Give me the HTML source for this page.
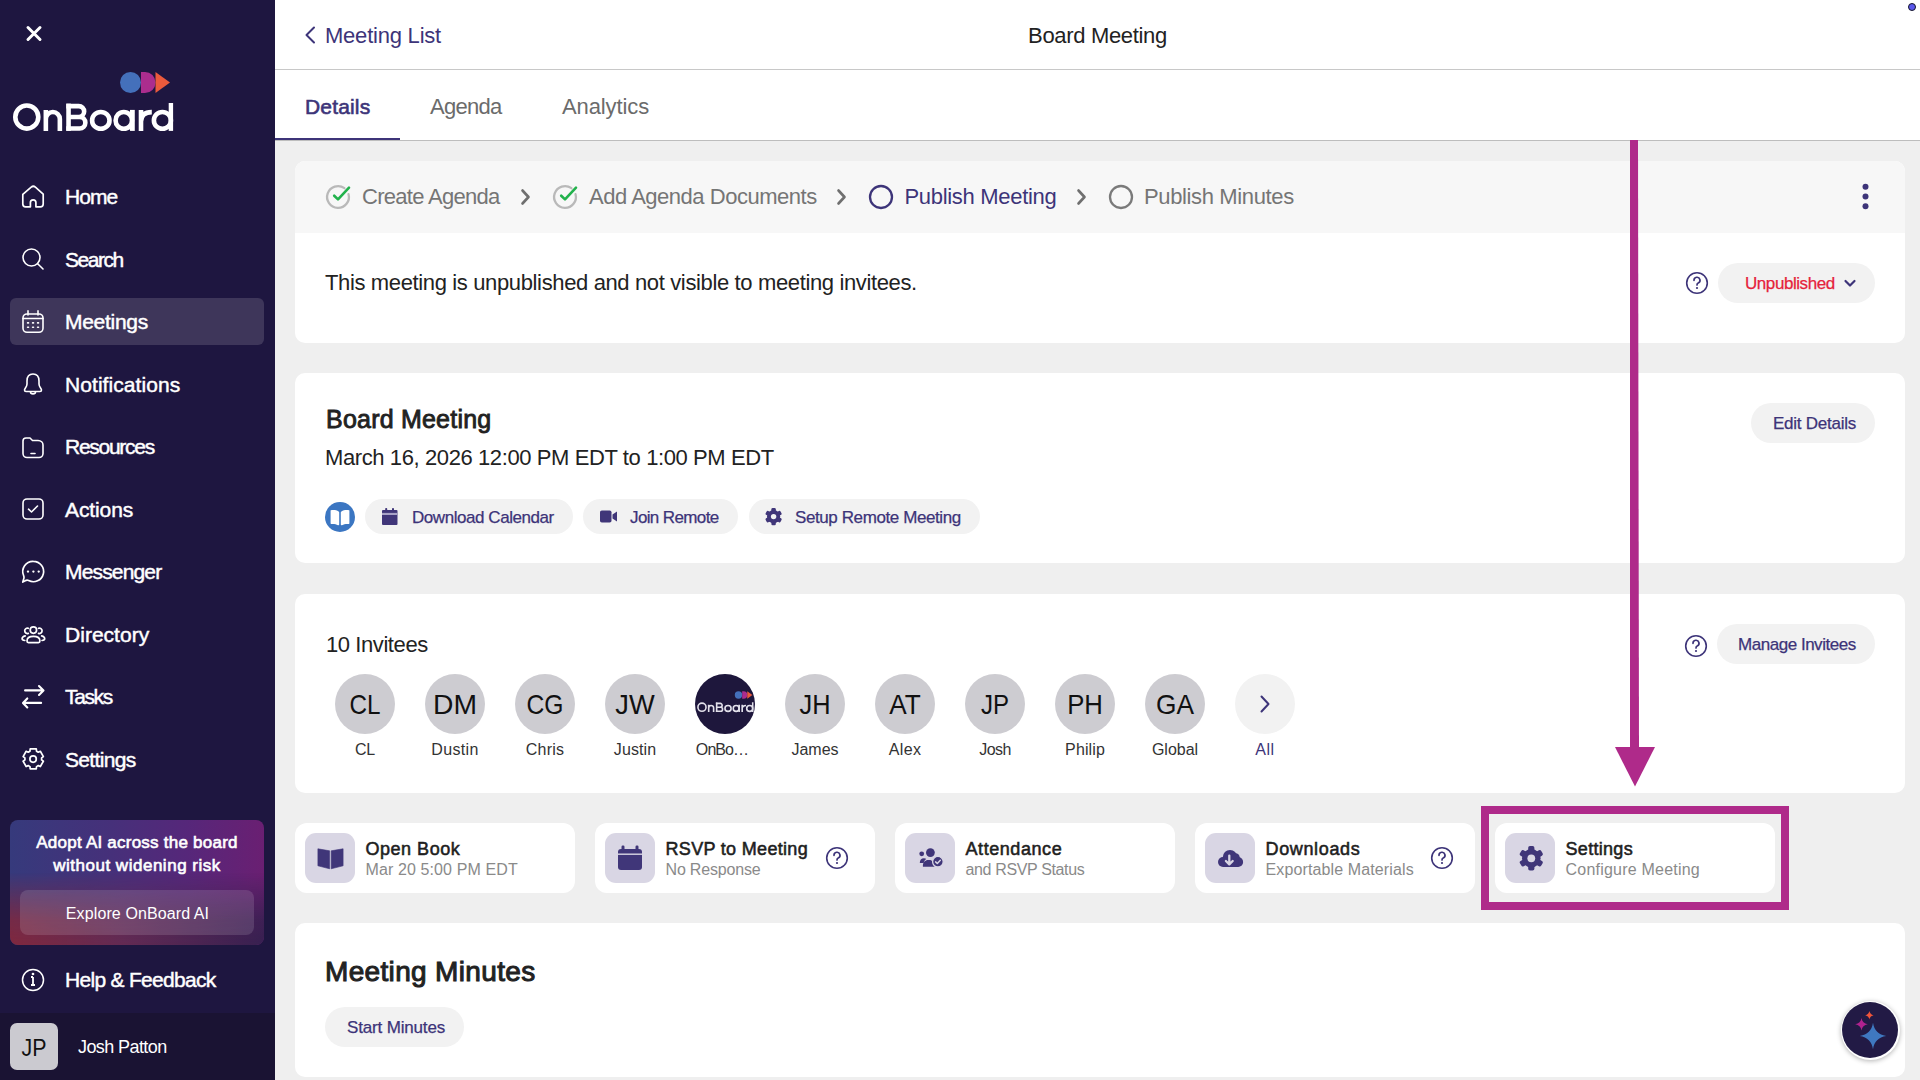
<!DOCTYPE html>
<html><head><meta charset="utf-8"><title>OnBoard - Board Meeting</title>
<style>
html,body{margin:0;padding:0;}
body{width:1920px;height:1080px;overflow:hidden;position:relative;background:#efefef;font-family:"Liberation Sans",sans-serif;}
.t{position:absolute;white-space:nowrap;line-height:1;}
</style></head><body>
<div id="sb" style="position:absolute;left:0;top:0;width:275px;height:1080px;background:#1e1640"></div>
<div style="position:absolute;left:0;top:1013px;width:275px;height:67px;background:#1a1333"></div>
<svg style="position:absolute;left:0;top:0" width="70" height="70"><path d="M28 27.5 L40 39.5 M40 27.5 L28 39.5" stroke="#fff" stroke-width="3" stroke-linecap="round"/></svg>
<svg style="position:absolute;left:110px;top:66px" width="70" height="34" viewBox="110 66 70 34"><circle cx="130.5" cy="82.5" r="10.5" fill="#4470bb"/><path d="M141 72 H145 A10.5 10.5 0 0 1 145 93 H141 Z" fill="#ab2d8e"/><path d="M155.5 72 L170 82.5 L155.5 93 Z" fill="#eb5a3c"/></svg>
<svg style="position:absolute;left:0;top:95px" width="180" height="40" viewBox="0 95 180 40" fill="none" stroke="#fff" stroke-width="4.6"><ellipse cx="26.8" cy="117.05" rx="11.5" ry="11.55"/><path d="M45.85 110.1 V130.9 M45.85 119 A7 7 0 0 1 59.85 119 V130.9"/><path d="M68.55 103.6 V130.9"/><path d="M66.3 106.15 H78.7 A5.45 5.45 0 0 1 78.7 117.05 H68.55 M68.55 117.05 H79.6 A5.75 5.75 0 0 1 79.6 128.55 H66.3"/><ellipse cx="100.8" cy="120.4" rx="8.7" ry="8.4"/><ellipse cx="123.8" cy="120.4" rx="8.2" ry="8.4"/><path d="M132.4 109.9 V130.9" stroke-width="4.75"/><path d="M141 109.9 V130.9 M141 121.5 C141 114.6 145 112.1 151.8 112.1"/><ellipse cx="162.4" cy="120.4" rx="8.5" ry="8.4"/><path d="M170.9 103 V130.9" stroke-width="4.4"/></svg>
<div style="position:absolute;left:10px;top:298px;width:254px;height:47px;border-radius:6px;background:#3e365a"></div>
<div class="t" id="nav0" style="left:65px;top:186.42px;font-size:21px;color:#fff;font-weight:400;letter-spacing:-0.944px;-webkit-text-stroke-width:0.45px;">Home</div>
<div class="t" id="nav1" style="left:65px;top:248.92px;font-size:21px;color:#fff;font-weight:400;letter-spacing:-1.468px;-webkit-text-stroke-width:0.45px;">Search</div>
<div class="t" id="nav2" style="left:65px;top:311.42px;font-size:21px;color:#fff;font-weight:400;letter-spacing:-0.287px;-webkit-text-stroke-width:0.45px;">Meetings</div>
<div class="t" id="nav3" style="left:65px;top:373.92px;font-size:21px;color:#fff;font-weight:400;letter-spacing:0.067px;-webkit-text-stroke-width:0.45px;">Notifications</div>
<div class="t" id="nav4" style="left:65px;top:436.42px;font-size:21px;color:#fff;font-weight:400;letter-spacing:-1.272px;-webkit-text-stroke-width:0.45px;">Resources</div>
<div class="t" id="nav5" style="left:65px;top:498.92px;font-size:21px;color:#fff;font-weight:400;letter-spacing:-0.112px;-webkit-text-stroke-width:0.45px;">Actions</div>
<div class="t" id="nav6" style="left:65px;top:561.42px;font-size:21px;color:#fff;font-weight:400;letter-spacing:-0.836px;-webkit-text-stroke-width:0.45px;">Messenger</div>
<div class="t" id="nav7" style="left:65px;top:623.92px;font-size:21px;color:#fff;font-weight:400;letter-spacing:0.023px;-webkit-text-stroke-width:0.45px;">Directory</div>
<div class="t" id="nav8" style="left:65px;top:686.42px;font-size:21px;color:#fff;font-weight:400;letter-spacing:-1.372px;-webkit-text-stroke-width:0.45px;">Tasks</div>
<div class="t" id="nav9" style="left:65px;top:748.92px;font-size:21px;color:#fff;font-weight:400;letter-spacing:-0.670px;-webkit-text-stroke-width:0.45px;">Settings</div>
<svg style="position:absolute;left:18px;top:181.5px" width="30" height="30" viewBox="0 0 30 30" fill="none" stroke="#fff" stroke-width="1.6" stroke-linecap="round" stroke-linejoin="round"><path d="M4.8 12.4 L13.2 5.1 Q15.3 3.4 17.4 5.1 L25.2 12.1 V22 A2.8 2.8 0 0 1 22.4 24.8 H17.9 V20.6 A2.75 2.75 0 0 0 12.4 20.6 V24.8 H7.6 A2.8 2.8 0 0 1 4.8 22 Z" stroke-width="1.7"/></svg>
<svg style="position:absolute;left:18px;top:244.0px" width="30" height="30" viewBox="0 0 30 30" fill="none" stroke="#fff" stroke-width="1.6" stroke-linecap="round" stroke-linejoin="round"><circle cx="13.5" cy="13.5" r="8.5"/><path d="M19.7 19.7 L25 25"/></svg>
<svg style="position:absolute;left:18px;top:306.5px" width="30" height="30" viewBox="0 0 30 30" fill="none" stroke="#fff" stroke-width="1.6" stroke-linecap="round" stroke-linejoin="round"><rect x="5" y="7" width="20" height="18.3" rx="4"/><path d="M5 11.5 H25 M10 3.9 V8 M20 3.9 V8"/><path d="M9.6 15.9h.9 M14.6 15.9h.9 M19.6 15.9h.9 M9.6 20.3h.9 M14.6 20.3h.9 M19.6 20.3h.9" stroke-width="1.6"/></svg>
<svg style="position:absolute;left:18px;top:369.0px" width="30" height="30" viewBox="0 0 30 30" fill="none" stroke="#fff" stroke-width="1.6" stroke-linecap="round" stroke-linejoin="round"><path d="M15 5 C10.5 5 9 8.5 9 12 V15 C9 18 6.5 19.5 6.5 21 C6.5 22 7 22.5 8 22.5 H22 C23 22.5 23.5 22 23.5 21 C23.5 19.5 21 18 21 15 V12 C21 8.5 19.5 5 15 5 Z"/><path d="M12.5 23 C12.5 25.5 17.5 25.5 17.5 23"/></svg>
<svg style="position:absolute;left:18px;top:431.5px" width="30" height="30" viewBox="0 0 30 30" fill="none" stroke="#fff" stroke-width="1.6" stroke-linecap="round" stroke-linejoin="round"><path d="M5 9 A3 3 0 0 1 8 6 H12 L14.5 8.5 H20 C23 8.5 25 10.5 25 13 V21.5 A4 4 0 0 1 21 25.5 H9 A4 4 0 0 1 5 21.5 Z"/><path d="M13 21.5 H17"/></svg>
<svg style="position:absolute;left:18px;top:494.0px" width="30" height="30" viewBox="0 0 30 30" fill="none" stroke="#fff" stroke-width="1.6" stroke-linecap="round" stroke-linejoin="round"><rect x="5" y="5" width="20" height="20" rx="4"/><path d="M10.5 15.2 L13.5 18 L19.5 12"/></svg>
<svg style="position:absolute;left:18px;top:556.5px" width="30" height="30" viewBox="0 0 30 30" fill="none" stroke="#fff" stroke-width="1.6" stroke-linecap="round" stroke-linejoin="round"><path d="M15.4 4.3 A10.2 10.2 0 1 1 10.6 23.5 C9.5 23 8.5 23 7.2 23.8 L4.8 25 L5.9 21.3 C6.2 20.3 6 19.5 5.6 18.5 A10.2 10.2 0 0 1 15.4 4.3 Z" stroke-width="1.7"/><path d="M9.9 14.6h.2 M15.3 14.6h.2 M20.6 14.6h.2" stroke-width="2.2"/></svg>
<svg style="position:absolute;left:18px;top:619.0px" width="30" height="30" viewBox="0 0 30 30" fill="none" stroke="#fff" stroke-width="1.6" stroke-linecap="round" stroke-linejoin="round"><circle cx="15.4" cy="11.1" r="3.2" stroke-width="1.7"/><path d="M10.3 9.3 A2.7 2.7 0 1 0 10.3 14.4 M20.5 9.3 A2.7 2.7 0 1 1 20.5 14.4" stroke-width="1.7"/><path d="M9 22 C9 19 11.5 17.4 15.4 17.4 C19.3 17.4 21.9 19 21.9 22 C21.9 23 21.4 23.6 20.5 23.6 H10.4 C9.5 23.6 9 23 9 22 Z" stroke-width="1.7"/><path d="M7.2 16.9 C5.2 17.4 4.1 18.6 4.1 19.8 C4.1 20.8 5 21.4 6.8 21.5 M23.6 16.9 C25.6 17.4 26.7 18.6 26.7 19.8 C26.7 20.8 25.8 21.4 24 21.5" stroke-width="1.7"/></svg>
<svg style="position:absolute;left:18px;top:681.5px" width="30" height="30" viewBox="0 0 30 30" fill="none" stroke="#fff" stroke-width="1.6" stroke-linecap="round" stroke-linejoin="round"><path d="M7.1 8.4 H25.3 M21 4 L25.5 8.4 L21 12.9 M23.1 20.9 H5.2 M9.3 16.4 L5 20.9 L9.3 25.4" stroke-width="2.1"/></svg>
<svg style="position:absolute;left:18px;top:744.0px" width="30" height="30" viewBox="0 0 30 30" fill="none" stroke="#fff" stroke-width="1.6" stroke-linecap="round" stroke-linejoin="round"><path d="M12.21 4.95 L18.29 4.95 L18.53 7.17 L20.31 8.19 L22.34 7.29 L25.38 12.56 L23.59 13.88 L23.59 15.92 L25.38 17.24 L22.34 22.51 L20.31 21.61 L18.53 22.63 L18.29 24.85 L12.21 24.85 L11.97 22.63 L10.19 21.61 L8.16 22.51 L5.12 17.24 L6.91 15.92 L6.91 13.88 L5.12 12.56 L8.16 7.29 L10.19 8.19 L11.97 7.17 Z" stroke-width="1.7"/><circle cx="15.1" cy="15.1" r="3.2" stroke-width="1.7"/></svg>
<div style="position:absolute;left:10px;top:820px;width:254px;height:125px;border-radius:8px;background:linear-gradient(90deg,#363a7c 0%,#46307a 40%,#56277a 70%,#6a1f72 100%);overflow:hidden"><div style="position:absolute;left:0;top:0;width:254px;height:125px;background:linear-gradient(90deg,rgba(128,40,62,1) 0%,rgba(100,42,80,0.95) 45%,rgba(52,32,78,0.95) 100%);-webkit-mask-image:linear-gradient(180deg,transparent 0%,transparent 42%,rgba(0,0,0,0.85) 80%,#000 100%)"></div></div>
<div style="position:absolute;left:20px;top:890px;width:234px;height:45px;border-radius:8px;background:rgba(255,255,255,0.13)"></div>
<div class="t" id="ai1" style="left:137px;transform:translateX(-50%);top:833.61px;font-size:17px;color:#fff;font-weight:400;letter-spacing:0.232px;-webkit-text-stroke-width:0.6px;">Adopt AI across the board</div>
<div class="t" id="ai2" style="left:137px;transform:translateX(-50%);top:856.61px;font-size:17px;color:#fff;font-weight:400;letter-spacing:0.517px;-webkit-text-stroke-width:0.6px;">without widening risk</div>
<div class="t" id="ai3" style="left:137.5px;transform:translateX(-50%);top:906.45px;font-size:16px;color:#fff;font-weight:400;letter-spacing:0.105px;">Explore OnBoard AI</div>
<svg style="position:absolute;left:18px;top:964.5px" width="30" height="30" viewBox="0 0 30 30" fill="none" stroke="#fff" stroke-width="1.5"><circle cx="15" cy="15" r="10.5"/><path d="M15 12 V20 M13 12 H15 M13 20 H17" stroke-width="1.8"/><circle cx="15" cy="9" r="0.6" fill="#fff"/></svg>
<div class="t" id="help" style="left:65px;top:969.42px;font-size:21px;color:#fff;font-weight:400;letter-spacing:-0.707px;-webkit-text-stroke-width:0.45px;">Help &amp; Feedback</div>
<div style="position:absolute;left:10px;top:1023px;width:48px;height:47px;border-radius:7px;background:#cbcad0"></div>
<div class="t" id="jp" style="left:34px;transform:translateX(-50%) scaleX(0.892);top:1036.18px;font-size:24px;color:#111;font-weight:400;letter-spacing:0.000px;">JP</div>
<div class="t" id="josh" style="left:78px;top:1037.56px;font-size:18px;color:#fff;font-weight:400;letter-spacing:-0.586px;">Josh Patton</div>
<div style="position:absolute;left:275px;top:0;width:1645px;height:140px;background:#fff"></div>
<div style="position:absolute;left:275px;top:69px;width:1645px;height:1px;background:#c8c8c8"></div>
<div style="position:absolute;left:275px;top:140px;width:1645px;height:1px;background:#bdbdbd"></div>
<svg style="position:absolute;left:300px;top:22px" width="20" height="26"><path d="M14 5.5 L6.5 13 L14 20.5" fill="none" stroke="#3d3479" stroke-width="2" stroke-linecap="round" stroke-linejoin="round"/></svg>
<div class="t" id="mlist" style="left:325px;top:25.17px;font-size:22px;color:#3d3479;font-weight:400;letter-spacing:-0.220px;">Meeting List</div>
<div class="t" id="hdr" style="left:1097.5px;transform:translateX(-50%);top:25.17px;font-size:22px;color:#222;font-weight:400;letter-spacing:-0.324px;">Board Meeting</div>
<div class="t" id="tab1" style="left:305px;top:96.42px;font-size:21px;color:#3d3479;font-weight:400;letter-spacing:0.168px;-webkit-text-stroke-width:0.6px;">Details</div>
<div class="t" id="tab2" style="left:430px;top:95.57px;font-size:22px;color:#6b6b6b;font-weight:400;letter-spacing:-0.733px;">Agenda</div>
<div class="t" id="tab3" style="left:562px;top:95.57px;font-size:22px;color:#6b6b6b;font-weight:400;letter-spacing:-0.105px;">Analytics</div>
<div style="position:absolute;left:275px;top:138px;width:125px;height:2px;background:#3d3479"></div>
<div style="position:absolute;left:1908px;top:3.2px;width:6px;height:6px;border-radius:50%;background:#5a57ec;border:1px solid #15152a"></div>
<div style="position:absolute;left:275px;top:141px;width:1645px;height:939px;background:#efefef"></div>
<div style="position:absolute;left:295px;top:161px;width:1610px;height:182px;border-radius:10px;background:#fff;overflow:hidden"><div style="position:absolute;left:0;top:0;width:1610px;height:72px;background:#f7f7f7"></div></div>
<svg style="position:absolute;left:324px;top:183px" width="28" height="28" viewBox="0 0 28 28" fill="none"><path d="M24.53 11.18 A10.9 10.9 0 1 1 20.41 5.18" stroke="#b9b9b9" stroke-width="2.3" stroke-linecap="round"/><path d="M10.2 12.7 L14 16.4 L25 4.6" stroke="#22b24c" stroke-width="2.6" stroke-linecap="round" stroke-linejoin="round"/></svg>
<div class="t" id="st1" style="left:362px;top:186.07px;font-size:22px;color:#757575;font-weight:400;letter-spacing:-0.715px;">Create Agenda</div>
<svg style="position:absolute;left:516px;top:187px" width="20" height="20" viewBox="0 0 20 20"><path d="M6.5 3.5 L12.5 10 L6.5 16.5" fill="none" stroke="#6f6f6f" stroke-width="2.6" stroke-linecap="round" stroke-linejoin="round"/></svg>
<svg style="position:absolute;left:551px;top:183px" width="28" height="28" viewBox="0 0 28 28" fill="none"><path d="M24.53 11.18 A10.9 10.9 0 1 1 20.41 5.18" stroke="#b9b9b9" stroke-width="2.3" stroke-linecap="round"/><path d="M10.2 12.7 L14 16.4 L25 4.6" stroke="#22b24c" stroke-width="2.6" stroke-linecap="round" stroke-linejoin="round"/></svg>
<div class="t" id="st2" style="left:589px;top:186.07px;font-size:22px;color:#757575;font-weight:400;letter-spacing:-0.478px;">Add Agenda Documents</div>
<svg style="position:absolute;left:832px;top:187px" width="20" height="20" viewBox="0 0 20 20"><path d="M6.5 3.5 L12.5 10 L6.5 16.5" fill="none" stroke="#6f6f6f" stroke-width="2.6" stroke-linecap="round" stroke-linejoin="round"/></svg>
<svg style="position:absolute;left:867px;top:183px" width="28" height="28" viewBox="0 0 28 28"><circle cx="14" cy="14" r="11" fill="none" stroke="#3d3479" stroke-width="2.3"/></svg>
<div class="t" id="st3" style="left:904.5px;top:186.07px;font-size:22px;color:#3d3479;font-weight:400;letter-spacing:-0.311px;">Publish Meeting</div>
<svg style="position:absolute;left:1072px;top:187px" width="20" height="20" viewBox="0 0 20 20"><path d="M6.5 3.5 L12.5 10 L6.5 16.5" fill="none" stroke="#6f6f6f" stroke-width="2.6" stroke-linecap="round" stroke-linejoin="round"/></svg>
<svg style="position:absolute;left:1107px;top:183px" width="28" height="28" viewBox="0 0 28 28"><circle cx="14" cy="14" r="11" fill="none" stroke="#7a7a7a" stroke-width="2.3"/></svg>
<div class="t" id="st4" style="left:1144px;top:186.07px;font-size:22px;color:#757575;font-weight:400;letter-spacing:-0.365px;">Publish Minutes</div>
<svg style="position:absolute;left:1855px;top:177px" width="20" height="40"><circle cx="10.5" cy="9.7" r="3" fill="#3d3479"/><circle cx="10.5" cy="19.5" r="3" fill="#3d3479"/><circle cx="10.5" cy="29.2" r="3" fill="#3d3479"/></svg>
<div class="t" id="unpub_msg" style="left:325px;top:272.27px;font-size:22px;color:#222;font-weight:400;letter-spacing:-0.364px;">This meeting is unpublished and not visible to meeting invitees.</div>
<svg style="position:absolute;left:1684px;top:269.5px" width="26" height="26" viewBox="0 0 26 26"><circle cx="13" cy="13" r="10.3" fill="none" stroke="#3d3479" stroke-width="1.6"/><path d="M10 10.3 A3 3 0 1 1 14.2 13 C13.3 13.4 13 14 13 15" fill="none" stroke="#3d3479" stroke-width="1.7" stroke-linecap="round"/><circle cx="13" cy="18" r="1.1" fill="#3d3479"/></svg>
<div style="position:absolute;left:1718px;top:263px;width:157px;height:40px;border-radius:20px;background:#f2f2f2"></div>
<div class="t" id="unpub" style="left:1745px;top:275.11px;font-size:17px;color:#e5223b;font-weight:400;letter-spacing:-0.433px;-webkit-text-stroke-width:0.25px;">Unpublished</div>
<svg style="position:absolute;left:1840px;top:273px" width="20" height="20"><path d="M5.5 8 L10 12.5 L14.5 8" fill="none" stroke="#3d3479" stroke-width="2.2" stroke-linecap="round" stroke-linejoin="round"/></svg>
<div style="position:absolute;left:295px;top:373px;width:1610px;height:190px;border-radius:10px;background:#fff"></div>
<div class="t" id="bm" style="left:326px;top:406.73px;font-size:25px;color:#222;font-weight:400;letter-spacing:0.217px;-webkit-text-stroke-width:0.85px;">Board Meeting</div>
<div class="t" id="date" style="left:325px;top:446.97px;font-size:22px;color:#222;font-weight:400;letter-spacing:-0.397px;">March 16, 2026 12:00 PM EDT to 1:00 PM EDT</div>
<div style="position:absolute;left:1751px;top:403px;width:124px;height:40px;border-radius:20px;background:#f2f2f2"></div>
<div class="t" id="edit" style="left:1773px;top:414.61px;font-size:17px;color:#3d3479;font-weight:400;letter-spacing:-0.253px;-webkit-text-stroke-width:0.25px;">Edit Details</div>
<svg style="position:absolute;left:325px;top:502px" width="30" height="30" viewBox="0 0 30 30"><circle cx="15" cy="15" r="15" fill="#3b76c2"/><path d="M5.8 8.2 C8.5 7.6 11.5 8 13.6 9.4 C14 9.7 14.2 10 14.2 10.5 V22.5 C14.2 23.2 13.6 23.5 13 23.2 C11 22 8.5 21.7 6.2 22 C5.7 22 5.6 21.7 5.6 21.3 V8.6 Z" fill="#fff"/><path d="M24.2 8.2 C21.5 7.6 18.5 8 16.4 9.4 C16 9.7 15.8 10 15.8 10.5 V22.5 C15.8 23.2 16.4 23.5 17 23.2 C19 22 21.5 21.7 23.8 22 C24.3 22 24.4 21.7 24.4 21.3 V8.6 Z" fill="#fff"/></svg>
<div style="position:absolute;left:365px;top:499px;width:208px;height:35px;border-radius:18px;background:#f2f2f2"></div><svg style="position:absolute;left:382px;top:508px" width="16" height="17" viewBox="0 0 16 17"><rect x="0" y="2" width="15.5" height="15" rx="1" fill="#403679"/><rect x="3.2" y="0" width="2" height="4" rx="0.8" fill="#403679"/><rect x="10" y="0" width="2" height="4" rx="0.8" fill="#403679"/><rect x="0" y="4.9" width="15.5" height="2.1" fill="#a8a2c6"/></svg>
<div class="t" id="c1t" style="left:412px;top:508.71px;font-size:17px;color:#3d3479;font-weight:400;letter-spacing:-0.445px;-webkit-text-stroke-width:0.25px;">Download Calendar</div>
<div style="position:absolute;left:583px;top:499px;width:155px;height:35px;border-radius:18px;background:#f2f2f2"></div><svg style="position:absolute;left:600px;top:508px" width="18" height="17" viewBox="0 0 18 17"><rect x="0" y="2.5" width="11.5" height="12" rx="1.8" fill="#403679"/><path d="M12.5 6.5 L17 3.5 V13.5 L12.5 10.5 Z" fill="#403679"/></svg>
<div class="t" id="c2t" style="left:630px;top:508.71px;font-size:17px;color:#3d3479;font-weight:400;letter-spacing:-0.625px;-webkit-text-stroke-width:0.25px;">Join Remote</div>
<div style="position:absolute;left:749px;top:499px;width:231px;height:35px;border-radius:18px;background:#f2f2f2"></div><svg style="position:absolute;left:764.40px;top:506.90px" width="19.2" height="19.2" viewBox="-9.6 -9.6 19.2 19.2"><g transform="rotate(0)"><circle r="6.6" fill="#403679"/><rect x="-2.2" y="-8.6" width="4.4" height="8.6" rx="1.23" fill="#403679" transform="rotate(0)"/><rect x="-2.2" y="-8.6" width="4.4" height="8.6" rx="1.23" fill="#403679" transform="rotate(60)"/><rect x="-2.2" y="-8.6" width="4.4" height="8.6" rx="1.23" fill="#403679" transform="rotate(120)"/><rect x="-2.2" y="-8.6" width="4.4" height="8.6" rx="1.23" fill="#403679" transform="rotate(180)"/><rect x="-2.2" y="-8.6" width="4.4" height="8.6" rx="1.23" fill="#403679" transform="rotate(240)"/><rect x="-2.2" y="-8.6" width="4.4" height="8.6" rx="1.23" fill="#403679" transform="rotate(300)"/><circle r="2.7" fill="#f2f2f2"/></g></svg>
<div class="t" id="c3t" style="left:795px;top:508.71px;font-size:17px;color:#3d3479;font-weight:400;letter-spacing:-0.405px;-webkit-text-stroke-width:0.25px;">Setup Remote Meeting</div>
<div style="position:absolute;left:295px;top:594px;width:1610px;height:199px;border-radius:10px;background:#fff"></div>
<div class="t" id="inv" style="left:326px;top:634.17px;font-size:22px;color:#222;font-weight:400;letter-spacing:-0.421px;">10 Invitees</div>
<svg style="position:absolute;left:1683px;top:632.5px" width="26" height="26" viewBox="0 0 26 26"><circle cx="13" cy="13" r="10.3" fill="none" stroke="#3d3479" stroke-width="1.6"/><path d="M10 10.3 A3 3 0 1 1 14.2 13 C13.3 13.4 13 14 13 15" fill="none" stroke="#3d3479" stroke-width="1.7" stroke-linecap="round"/><circle cx="13" cy="18" r="1.1" fill="#3d3479"/></svg>
<div style="position:absolute;left:1717px;top:624px;width:158px;height:40px;border-radius:20px;background:#f2f2f2"></div>
<div class="t" id="manage" style="left:1738px;top:635.61px;font-size:17px;color:#3d3479;font-weight:400;letter-spacing:-0.468px;-webkit-text-stroke-width:0.25px;">Manage Invitees</div>
<div style="position:absolute;left:335px;top:674px;width:60px;height:60px;border-radius:50%;background:#cdccd1"></div>
<div class="t" id="ini0" style="left:365px;transform:translateX(-50%) scaleX(0.866);top:690.99px;font-size:28px;color:#111;font-weight:400;letter-spacing:0.000px;">CL</div>
<div class="t" id="nm0" style="left:365px;transform:translateX(-50%);top:742.05px;font-size:16px;color:#333;font-weight:400;letter-spacing:-0.253px;">CL</div>
<div style="position:absolute;left:425px;top:674px;width:60px;height:60px;border-radius:50%;background:#cdccd1"></div>
<div class="t" id="ini1" style="left:455px;transform:translateX(-50%) scaleX(1.010);top:690.99px;font-size:28px;color:#111;font-weight:400;letter-spacing:0.000px;">DM</div>
<div class="t" id="nm1" style="left:455px;transform:translateX(-50%);top:742.05px;font-size:16px;color:#333;font-weight:400;letter-spacing:0.367px;">Dustin</div>
<div style="position:absolute;left:515px;top:674px;width:60px;height:60px;border-radius:50%;background:#cdccd1"></div>
<div class="t" id="ini2" style="left:545px;transform:translateX(-50%) scaleX(0.881);top:690.99px;font-size:28px;color:#111;font-weight:400;letter-spacing:0.000px;">CG</div>
<div class="t" id="nm2" style="left:545px;transform:translateX(-50%);top:742.05px;font-size:16px;color:#333;font-weight:400;letter-spacing:0.213px;">Chris</div>
<div style="position:absolute;left:605px;top:674px;width:60px;height:60px;border-radius:50%;background:#cdccd1"></div>
<div class="t" id="ini3" style="left:635px;transform:translateX(-50%) scaleX(0.974);top:690.99px;font-size:28px;color:#111;font-weight:400;letter-spacing:0.000px;">JW</div>
<div class="t" id="nm3" style="left:635px;transform:translateX(-50%);top:742.05px;font-size:16px;color:#333;font-weight:400;letter-spacing:0.079px;">Justin</div>
<div style="position:absolute;left:695px;top:674px;width:60px;height:60px;border-radius:50%;background:#1e173c;overflow:hidden"><svg style="position:absolute;left:0;top:0" width="60" height="60" viewBox="0 0 60 60"><g transform="translate(-2.458 -7.977) scale(0.352)"><circle cx="130.5" cy="82.5" r="10.5" fill="#4470bb"/><path d="M141 72 H145 A10.5 10.5 0 0 1 145 93 H141 Z" fill="#ab2d8e"/><path d="M155.5 72 L170 82.5 L155.5 93 Z" fill="#eb5a3c"/><g fill="none" stroke="#e2e0ea" stroke-width="4.6"><ellipse cx="26.8" cy="117.05" rx="11.5" ry="11.55"/><path d="M45.85 110.1 V130.9 M45.85 119 A7 7 0 0 1 59.85 119 V130.9"/><path d="M68.55 103.6 V130.9"/><path d="M66.3 106.15 H78.7 A5.45 5.45 0 0 1 78.7 117.05 H68.55 M68.55 117.05 H79.6 A5.75 5.75 0 0 1 79.6 128.55 H66.3"/><ellipse cx="100.8" cy="120.4" rx="8.7" ry="8.4"/><ellipse cx="123.8" cy="120.4" rx="8.2" ry="8.4"/><path d="M132.4 109.9 V130.9" stroke-width="4.75"/><path d="M141 109.9 V130.9 M141 121.5 C141 114.6 145 112.1 151.8 112.1"/><ellipse cx="162.4" cy="120.4" rx="8.5" ry="8.4"/><path d="M170.9 103 V130.9" stroke-width="4.4"/></g></g></svg></div>
<div class="t" id="nm4" style="left:722px;transform:translateX(-50%);top:742.05px;font-size:16px;color:#333;font-weight:400;letter-spacing:-0.929px;">OnBo…</div>
<div style="position:absolute;left:785px;top:674px;width:60px;height:60px;border-radius:50%;background:#cdccd1"></div>
<div class="t" id="ini5" style="left:815px;transform:translateX(-50%) scaleX(0.906);top:690.99px;font-size:28px;color:#111;font-weight:400;letter-spacing:0.000px;">JH</div>
<div class="t" id="nm5" style="left:815px;transform:translateX(-50%);top:742.05px;font-size:16px;color:#333;font-weight:400;letter-spacing:0.018px;">James</div>
<div style="position:absolute;left:875px;top:674px;width:60px;height:60px;border-radius:50%;background:#cdccd1"></div>
<div class="t" id="ini6" style="left:905px;transform:translateX(-50%) scaleX(0.935);top:690.99px;font-size:28px;color:#111;font-weight:400;letter-spacing:0.000px;">AT</div>
<div class="t" id="nm6" style="left:905px;transform:translateX(-50%);top:742.05px;font-size:16px;color:#333;font-weight:400;letter-spacing:0.354px;">Alex</div>
<div style="position:absolute;left:965px;top:674px;width:60px;height:60px;border-radius:50%;background:#cdccd1"></div>
<div class="t" id="ini7" style="left:995px;transform:translateX(-50%) scaleX(0.857);top:690.99px;font-size:28px;color:#111;font-weight:400;letter-spacing:0.000px;">JP</div>
<div class="t" id="nm7" style="left:995px;transform:translateX(-50%);top:742.05px;font-size:16px;color:#333;font-weight:400;letter-spacing:-0.537px;">Josh</div>
<div style="position:absolute;left:1055px;top:674px;width:60px;height:60px;border-radius:50%;background:#cdccd1"></div>
<div class="t" id="ini8" style="left:1085px;transform:translateX(-50%) scaleX(0.918);top:690.99px;font-size:28px;color:#111;font-weight:400;letter-spacing:0.000px;">PH</div>
<div class="t" id="nm8" style="left:1085px;transform:translateX(-50%);top:742.05px;font-size:16px;color:#333;font-weight:400;letter-spacing:0.113px;">Philip</div>
<div style="position:absolute;left:1145px;top:674px;width:60px;height:60px;border-radius:50%;background:#cdccd1"></div>
<div class="t" id="ini9" style="left:1175px;transform:translateX(-50%) scaleX(0.939);top:690.99px;font-size:28px;color:#111;font-weight:400;letter-spacing:0.000px;">GA</div>
<div class="t" id="nm9" style="left:1175px;transform:translateX(-50%);top:742.05px;font-size:16px;color:#333;font-weight:400;letter-spacing:-0.010px;">Global</div>
<div style="position:absolute;left:1235px;top:674px;width:60px;height:60px;border-radius:50%;background:#f2f2f2"></div>
<svg style="position:absolute;left:1255px;top:694px" width="20" height="20"><path d="M6.5 2.5 L13.5 10 L6.5 17.5" fill="none" stroke="#3d3479" stroke-width="2" stroke-linecap="round" stroke-linejoin="round"/></svg>
<div class="t" id="nmall" style="left:1265px;transform:translateX(-50%);top:742.05px;font-size:16px;color:#3d3479;font-weight:400;letter-spacing:0.553px;">All</div>
<div style="position:absolute;left:295px;top:823px;width:280px;height:70px;border-radius:12px;background:#fff"></div>
<div style="position:absolute;left:305px;top:833px;width:50px;height:50px;border-radius:11px;background:#d9d6e4"></div>
<div class="t" id="ct0" style="left:365.5px;top:839.56px;font-size:18px;color:#1e1e1e;font-weight:400;letter-spacing:0.516px;-webkit-text-stroke-width:0.55px;">Open Book</div>
<div class="t" id="cs0" style="left:365.5px;top:861.95px;font-size:16px;color:#8a8a8a;font-weight:400;letter-spacing:0.113px;">Mar 20 5:00 PM EDT</div>
<div style="position:absolute;left:595px;top:823px;width:280px;height:70px;border-radius:12px;background:#fff"></div>
<div style="position:absolute;left:605px;top:833px;width:50px;height:50px;border-radius:11px;background:#d9d6e4"></div>
<div class="t" id="ct1" style="left:665.5px;top:839.56px;font-size:18px;color:#1e1e1e;font-weight:400;letter-spacing:0.318px;-webkit-text-stroke-width:0.55px;">RSVP to Meeting</div>
<div class="t" id="cs1" style="left:665.5px;top:861.95px;font-size:16px;color:#8a8a8a;font-weight:400;letter-spacing:-0.175px;">No Response</div>
<svg style="position:absolute;left:824px;top:845px" width="26" height="26" viewBox="0 0 26 26"><circle cx="13" cy="13" r="10.3" fill="none" stroke="#3d3479" stroke-width="1.6"/><path d="M10 10.3 A3 3 0 1 1 14.2 13 C13.3 13.4 13 14 13 15" fill="none" stroke="#3d3479" stroke-width="1.7" stroke-linecap="round"/><circle cx="13" cy="18" r="1.1" fill="#3d3479"/></svg>
<div style="position:absolute;left:895px;top:823px;width:280px;height:70px;border-radius:12px;background:#fff"></div>
<div style="position:absolute;left:905px;top:833px;width:50px;height:50px;border-radius:11px;background:#d9d6e4"></div>
<div class="t" id="ct2" style="left:965.5px;top:839.56px;font-size:18px;color:#1e1e1e;font-weight:400;letter-spacing:0.569px;-webkit-text-stroke-width:0.55px;">Attendance</div>
<div class="t" id="cs2" style="left:965.5px;top:861.95px;font-size:16px;color:#8a8a8a;font-weight:400;letter-spacing:-0.360px;">and RSVP Status</div>
<div style="position:absolute;left:1195px;top:823px;width:280px;height:70px;border-radius:12px;background:#fff"></div>
<div style="position:absolute;left:1205px;top:833px;width:50px;height:50px;border-radius:11px;background:#d9d6e4"></div>
<div class="t" id="ct3" style="left:1265.5px;top:839.56px;font-size:18px;color:#1e1e1e;font-weight:400;letter-spacing:0.643px;-webkit-text-stroke-width:0.55px;">Downloads</div>
<div class="t" id="cs3" style="left:1265.5px;top:861.95px;font-size:16px;color:#8a8a8a;font-weight:400;letter-spacing:0.123px;">Exportable Materials</div>
<svg style="position:absolute;left:1429px;top:845px" width="26" height="26" viewBox="0 0 26 26"><circle cx="13" cy="13" r="10.3" fill="none" stroke="#3d3479" stroke-width="1.6"/><path d="M10 10.3 A3 3 0 1 1 14.2 13 C13.3 13.4 13 14 13 15" fill="none" stroke="#3d3479" stroke-width="1.7" stroke-linecap="round"/><circle cx="13" cy="18" r="1.1" fill="#3d3479"/></svg>
<div style="position:absolute;left:1495px;top:823px;width:280px;height:70px;border-radius:12px;background:#fff"></div>
<div style="position:absolute;left:1505px;top:833px;width:50px;height:50px;border-radius:11px;background:#d9d6e4"></div>
<div class="t" id="ct4" style="left:1565.5px;top:839.56px;font-size:18px;color:#1e1e1e;font-weight:400;letter-spacing:0.307px;-webkit-text-stroke-width:0.55px;">Settings</div>
<div class="t" id="cs4" style="left:1565.5px;top:861.95px;font-size:16px;color:#8a8a8a;font-weight:400;letter-spacing:0.216px;">Configure Meeting</div>
<svg style="position:absolute;left:305px;top:833px" width="50" height="50" viewBox="0 0 50 50"><path d="M12.9 15.8 L24.6 17.8 V35.8 L12.9 32.8 Z M26.2 17.8 L38.1 15.8 V32.8 L26.2 35.8 Z" fill="#403679" stroke="#403679" stroke-width="0.6" stroke-linejoin="round"/></svg>
<svg style="position:absolute;left:605px;top:833px" width="50" height="50" viewBox="0 0 50 50"><rect x="13" y="16" width="24" height="21" rx="3" fill="#403679"/><rect x="16.5" y="12.5" width="3" height="6" rx="1.2" fill="#403679"/><rect x="30.5" y="12.5" width="3" height="6" rx="1.2" fill="#403679"/><rect x="13" y="20.5" width="24" height="1.4" fill="#d9d6e4"/></svg>
<svg style="position:absolute;left:905px;top:833px" width="50" height="50" viewBox="0 0 50 50"><circle cx="16.7" cy="20.8" r="2.4" fill="#403679"/><path d="M14.8 30 C14.8 27.2 16.3 25.3 19 25.3 C20 25.3 20.8 25.6 21.3 26 C19.8 27 19 28.3 18.7 30 Z" fill="#403679"/><circle cx="25.4" cy="19.6" r="4.4" fill="#403679"/><path d="M17.9 33.7 V32.2 C17.9 29.3 20.2 27 23.1 27 H24.3 C27.2 27 29.5 29.3 29.5 32.2 V33.7 Z" fill="#403679"/><circle cx="32.9" cy="28.7" r="5.3" fill="#403679" stroke="#d9d6e4" stroke-width="1.3"/><path d="M30.6 28.9 L32.3 30.5 L35.3 27.3" fill="none" stroke="#d9d6e4" stroke-width="1.5" stroke-linecap="round" stroke-linejoin="round"/></svg>
<svg style="position:absolute;left:1205px;top:833px" width="50" height="50" viewBox="0 0 50 50"><circle cx="18" cy="29" r="5" fill="#403679"/><circle cx="33.1" cy="29" r="5" fill="#403679"/><circle cx="25" cy="24.2" r="7.2" fill="#403679"/><circle cx="30.5" cy="24.5" r="4.2" fill="#403679"/><rect x="18" y="24" width="15.1" height="10" fill="#403679"/><path d="M24.3 22.6 V31.2 M20.9 28 L24.3 31.4 L27.7 28" fill="none" stroke="#d9d6e4" stroke-width="2.3" stroke-linecap="round" stroke-linejoin="round"/></svg>
<svg style="position:absolute;left:1517.70px;top:845.20px" width="26.6" height="26.6" viewBox="-13.3 -13.3 26.6 26.6"><g transform="rotate(0)"><circle r="9.3" fill="#403679"/><rect x="-3.1" y="-12.3" width="6.2" height="12.3" rx="1.74" fill="#403679" transform="rotate(0)"/><rect x="-3.1" y="-12.3" width="6.2" height="12.3" rx="1.74" fill="#403679" transform="rotate(60)"/><rect x="-3.1" y="-12.3" width="6.2" height="12.3" rx="1.74" fill="#403679" transform="rotate(120)"/><rect x="-3.1" y="-12.3" width="6.2" height="12.3" rx="1.74" fill="#403679" transform="rotate(180)"/><rect x="-3.1" y="-12.3" width="6.2" height="12.3" rx="1.74" fill="#403679" transform="rotate(240)"/><rect x="-3.1" y="-12.3" width="6.2" height="12.3" rx="1.74" fill="#403679" transform="rotate(300)"/><circle r="3.9" fill="#d9d6e4"/></g></svg>
<div style="position:absolute;left:295px;top:923px;width:1610px;height:154px;border-radius:10px;background:#fff"></div>
<div class="t" id="mm" style="left:325px;top:958.09px;font-size:28px;color:#222;font-weight:400;letter-spacing:0.340px;-webkit-text-stroke-width:1.0px;">Meeting Minutes</div>
<div style="position:absolute;left:325px;top:1007px;width:139px;height:40px;border-radius:20px;background:#f2f2f2"></div>
<div class="t" id="startm" style="left:347px;top:1018.61px;font-size:17px;color:#3d3479;font-weight:400;letter-spacing:-0.163px;-webkit-text-stroke-width:0.25px;">Start Minutes</div>
<div style="position:absolute;left:1840.5px;top:1000.5px;width:59px;height:59px;border-radius:50%;background:#fff;box-shadow:0 1px 5px rgba(0,0,0,0.3)"></div>
<div style="position:absolute;left:1842px;top:1002px;width:56px;height:56px;border-radius:50%;background:#221a45"></div>
<svg style="position:absolute;left:0;top:0" width="1920" height="1080" viewBox="0 0 1920 1080"><path d="M1873.00 1022.80 C1874.19 1030.46 1878.54 1034.81 1886.20 1036.00 C1878.54 1037.19 1874.19 1041.54 1873.00 1049.20 C1871.81 1041.54 1867.46 1037.19 1859.80 1036.00 C1867.46 1034.81 1871.81 1030.46 1873.00 1022.80 Z" fill="#3f78c0"/><path d="M1861.50 1017.90 C1862.13 1021.55 1864.15 1023.57 1867.80 1024.20 C1864.15 1024.83 1862.13 1026.85 1861.50 1030.50 C1860.87 1026.85 1858.85 1024.83 1855.20 1024.20 C1858.85 1023.57 1860.87 1021.55 1861.50 1017.90 Z" fill="#b0228f"/><path d="M1869.40 1011.10 C1869.90 1013.54 1871.16 1014.80 1873.60 1015.30 C1871.16 1015.80 1869.90 1017.06 1869.40 1019.50 C1868.90 1017.06 1867.64 1015.80 1865.20 1015.30 C1867.64 1014.80 1868.90 1013.54 1869.40 1011.10 Z" fill="#f0553a"/></svg>
<svg style="position:absolute;left:0;top:0" width="1920" height="1080" viewBox="0 0 1920 1080"><path d="M1630 140 L1638 140 L1639 748 L1630 748 Z" fill="#af2a8a"/><path d="M1615 747 L1655 747 L1635 786.5 Z" fill="#af2a8a"/><rect x="1485" y="810" width="300" height="96" fill="none" stroke="#af2a8a" stroke-width="8"/></svg>
</body></html>
